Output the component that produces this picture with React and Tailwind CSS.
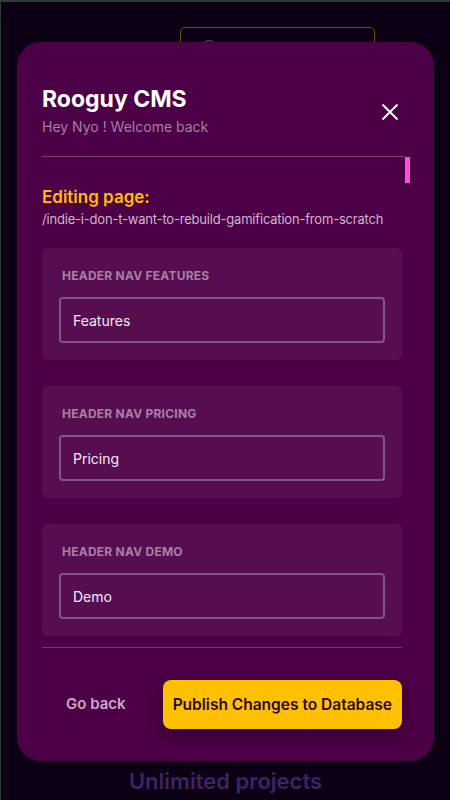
import { useState } from 'react';

const FIELDS = [
  { key: 'header_nav_features', label: 'Header Nav Features', value: 'Features' },
  { key: 'header_nav_pricing', label: 'Header Nav Pricing', value: 'Pricing' },
  { key: 'header_nav_demo', label: 'Header Nav Demo', value: 'Demo' },
  { key: 'header_cta', label: 'Header CTA', value: 'Get started' },
  { key: 'hero_title', label: 'Hero Title', value: 'Unlimited projects' },
];

function CloseIcon() {
  return (
    <svg width="24" height="24" viewBox="0 0 24 24" fill="none" stroke="currentColor" strokeWidth="2">
      <path d="M4.5 4.5 19.5 19.5" />
      <path d="M19.5 4.5 4.5 19.5" />
    </svg>
  );
}

function FieldCard({ label, value, onChange }) {
  return (
    <div className="rounded-md bg-[#570e50] px-[17px] pt-5 pb-[17px]">
      <label className="mb-[13px] block pl-[3px] text-xs leading-4 font-bold tracking-[0.02em] text-[#a97ea6] uppercase">
        {label}
      </label>
      <input
        value={value}
        onChange={(e) => onChange(e.target.value)}
        className="h-[46px] w-full rounded-[4px] border-2 border-[#87538a] bg-transparent px-3 text-[14px] text-[#f6eaf5] outline-none"
      />
    </div>
  );
}

export default function App() {
  const [values, setValues] = useState(
    Object.fromEntries(FIELDS.map((f) => [f.key, f.value]))
  );

  return (
    <div className="relative h-[800px] w-full overflow-hidden border-t-2 border-l border-[#2c3a3a] bg-[#0d0014] font-['Inter',sans-serif]">
      {/* page behind the overlay */}
      <div className="flex justify-center pt-[25px] pl-[104px]">
        <div className="h-10 w-[195px] rounded-[5px] border border-[#6c4f00] pt-3 pl-[20px]">
          <div className="h-4 w-4 rounded-full border border-[#5a5a66]" />
        </div>
      </div>
      <p className="absolute bottom-[5px] left-0 w-full text-center text-[22px] leading-7 font-semibold text-[#3b2465]">
        Unlimited projects
      </p>

      {/* modal overlay */}
      <div className="absolute inset-0 pt-[40px] pl-[16px] pr-[16px]">
        <div className="flex h-[719px] flex-col rounded-[24px] bg-[#4c0046] pt-[41px] pr-[32px] pb-[32px] pl-[25px]">
          <div className="flex items-center justify-between">
            <div>
              <h1 className="text-[23px] leading-8 font-bold text-white">Rooguy CMS</h1>
              <p className="mt-[2px] text-[14px] leading-5 text-[#a97ca6]">Hey Nyo ! Welcome back</p>
            </div>
            <button className="mt-1 text-white">
              <CloseIcon />
            </button>
          </div>

          <div className="mt-[19px] -mr-[8px] flex min-h-0 flex-1 flex-col">
            <div className="mr-[5px] h-px bg-[#7a4478]" />
            <div className="flex min-h-0 flex-1">
              <div className="min-w-0 flex-1 overflow-hidden pt-7 pr-[3px]">
                <h2 className="text-[17px] leading-6 font-semibold text-[#ffbd00]">Editing page:</h2>
                <p className="text-[13px] leading-5 tracking-[-0.015em] whitespace-nowrap text-[#cfb6cd]">
                  /indie-i-don-t-want-to-rebuild-gamification-from-scratch
                </p>
                <div className="mt-[19px] flex flex-col gap-[26px]">
                  {FIELDS.map((f) => (
                    <FieldCard
                      key={f.key}
                      label={f.label}
                      value={values[f.key]}
                      onChange={(v) => setValues((s) => ({ ...s, [f.key]: v }))}
                    />
                  ))}
                </div>
              </div>
              {/* scrollbar */}
              <div className="w-[5px]">
                <div className="h-[26px] w-full bg-[#ff4fd8]" />
              </div>
            </div>
          </div>

          <div className="h-px bg-[#6f3a6c]" />

          <div className="mt-[32px] flex items-center justify-between">
            <button className="px-6 text-[15px] font-semibold text-[#c9a9c7]">Go back</button>
            <button className="h-[49px] rounded-lg bg-[#ffc000] px-[10px] text-[15.5px] font-semibold text-[#2a0829] shadow-[0_6px_14px_rgba(20,0,20,0.45)]">
              Publish Changes to Database
            </button>
          </div>
        </div>
      </div>
    </div>
  );
}
